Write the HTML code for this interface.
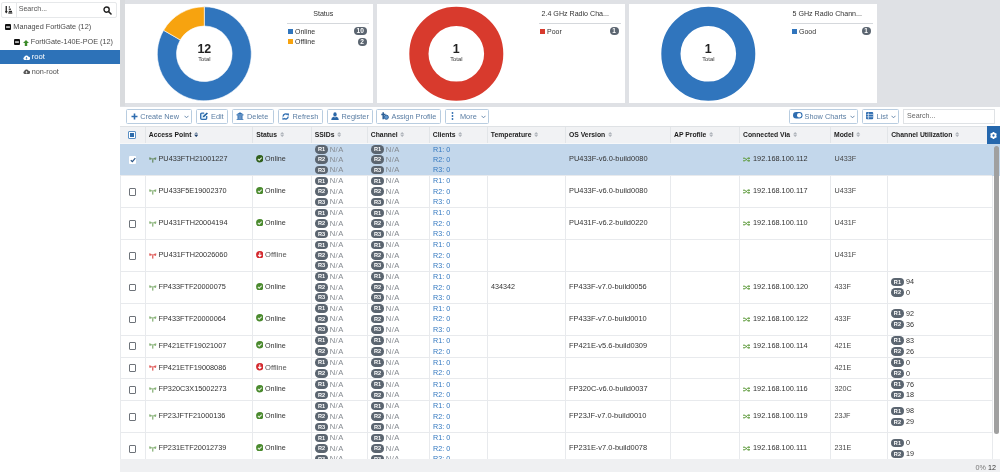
<!DOCTYPE html><html><head><meta charset="utf-8"><style>
html,body{margin:0;padding:0}
body{width:1000px;height:472px;overflow:hidden;position:relative;background:#dfe1e5;font-family:"Liberation Sans", sans-serif;}
div,span{box-sizing:border-box}
</style></head><body><div style="position:absolute;left:0;top:0;width:1000px;height:472px;will-change:transform">
<div style="position:absolute;left:0px;top:0px;width:120px;height:472px;background:#fff"></div>
<div style="position:absolute;left:1px;top:2px;width:116px;height:15.5px;border:1px solid #e6e8ea;border-radius:2px;background:#fff"></div>
<div style="position:absolute;left:16px;top:2px;width:1px;height:15.5px;background:#e6e8ea"></div>
<svg style="position:absolute;left:5px;top:6px" width="8" height="8" viewBox="0 0 8 8"><rect x="0.6" y="0" width="1.3" height="6" fill="#222"/><path d="M-0.3 5.2 L1.25 7.6 L2.8 5.2Z" fill="#222"/><rect x="3.8" y="0.4" width="1.2" height="1.2" fill="#222"/><rect x="3.8" y="2.6" width="2.2" height="1.2" fill="#222"/><rect x="3.8" y="4.8" width="3.2" height="1.4" fill="#222"/><rect x="3.3" y="6.4" width="4" height="1.2" fill="#222"/></svg>
<div style="position:absolute;left:18.7px;top:6.390px;line-height:7.1px;font-size:7.1px;color:#555;font-weight:normal;white-space:nowrap;">Search...</div>
<svg style="position:absolute;left:103px;top:6px" width="9" height="9" viewBox="0 0 9 9"><circle cx="3.6" cy="3.6" r="2.6" stroke="#222" stroke-width="1.4" fill="none"/><path d="M5.5 5.5 L8 8" stroke="#222" stroke-width="1.6" stroke-linecap="round"/></svg>
<svg style="position:absolute;left:5px;top:24.2px" width="6" height="6" viewBox="0 0 6 6"><rect x="0" y="0" width="6" height="6" rx="1" fill="#111"/><rect x="1.1" y="2.4" width="3.8" height="1.3" fill="#fff"/></svg>
<div style="position:absolute;left:13.3px;top:23.121px;line-height:7.3px;font-size:7.3px;color:#4a4a4a;font-weight:normal;white-space:nowrap;">Managed FortiGate (12)</div>
<svg style="position:absolute;left:14px;top:39.2px" width="6" height="6" viewBox="0 0 6 6"><rect x="0" y="0" width="6" height="6" rx="1" fill="#111"/><rect x="1.1" y="2.4" width="3.8" height="1.3" fill="#fff"/></svg>
<svg style="position:absolute;left:23px;top:39.5px" width="6" height="6" viewBox="0 0 6 6"><path d="M3 0 L6 3 L4.2 3 L4.2 6 L1.8 6 L1.8 3 L0 3Z" fill="#3d8b2a"/></svg>
<div style="position:absolute;left:30.8px;top:38.263px;line-height:7.25px;font-size:7.25px;color:#4a4a4a;font-weight:normal;white-space:nowrap;">FortiGate-140E-POE (12)</div>
<div style="position:absolute;left:0px;top:50px;width:120px;height:14.3px;background:#2d72b8"></div>
<svg style="position:absolute;left:23px;top:54.5px" width="7" height="5" viewBox="0 0 7 5"><path d="M1.5 5 A1.5 1.5 0 0 1 1.2 2.2 A2.3 2.3 0 0 1 5.5 1.8 A1.6 1.6 0 0 1 5.6 5Z" fill="#fff"/><path d="M3.5 4.4 L3.5 2.6 M2.6 3.3 L3.5 2.4 L4.4 3.3" stroke="#2d72b8" stroke-width="0.8" fill="none"/></svg>
<div style="position:absolute;left:31.7px;top:53.167px;line-height:7.6px;font-size:7.6px;color:#fff;font-weight:normal;white-space:nowrap;">root</div>
<svg style="position:absolute;left:23px;top:69.2px" width="7" height="5" viewBox="0 0 7 5"><path d="M1.5 5 A1.5 1.5 0 0 1 1.2 2.2 A2.3 2.3 0 0 1 5.5 1.8 A1.6 1.6 0 0 1 5.6 5Z" fill="#555"/><path d="M3.5 4.4 L3.5 2.6 M2.6 3.3 L3.5 2.4 L4.4 3.3" stroke="#fff" stroke-width="0.8" fill="none"/></svg>
<div style="position:absolute;left:31.7px;top:68.221px;line-height:7.3px;font-size:7.3px;color:#505050;font-weight:normal;white-space:nowrap;">non-root</div>
<div style="position:absolute;left:120px;top:0px;width:5px;height:106px;background:#d9dbde"></div>
<div style="position:absolute;left:125px;top:3.5px;width:248px;height:99.5px;background:#fff"></div>
<svg style="position:absolute;left:125px;top:3.5px" width="160" height="99.5" viewBox="0 0 160 99.5"><path d="M79.30 2.80 A47 47 0 1 1 38.60 26.30 L55.22 35.90 A27.8 27.8 0 1 0 79.30 22.00Z" fill="#3075bd" stroke="#fff" stroke-width="0.6"/><path d="M38.60 26.30 A47 47 0 0 1 79.30 2.80 L79.30 22.00 A27.8 27.8 0 0 0 55.22 35.90Z" fill="#f7a30f" stroke="#fff" stroke-width="0.6"/></svg>
<div style="position:absolute;left:184.3px;top:41.699999999999996px;width:40px;text-align:center;font-size:12.4px;line-height:14px;font-weight:bold;color:#222">12</div>
<div style="position:absolute;left:184.3px;top:55.9px;width:40px;text-align:center;font-size:5.8px;line-height:6px;color:#333">Total</div>
<div style="position:absolute;left:287px;top:9.7px;width:72.5px;text-align:center;font-size:7.1px;line-height:9px;color:#333;white-space:nowrap">Status</div>
<div style="position:absolute;left:287px;top:22.7px;width:82px;height:0.8px;background:#d5d8dc"></div>
<div style="position:absolute;left:287.7px;top:28.5px;width:5.4px;height:5.4px;background:#3075bd"></div>
<div style="position:absolute;left:295px;top:27.874px;line-height:7.0px;font-size:7.0px;color:#333;font-weight:normal;white-space:nowrap;">Online</div>
<div style="position:absolute;left:354.0px;top:26.9px;width:12.5px;height:8.6px;border-radius:4.3px;background:#5b6570;color:#fff;font-size:6.6px;line-height:8.6px;text-align:center;font-weight:bold">10</div>
<div style="position:absolute;left:287.7px;top:39.099999999999994px;width:5.4px;height:5.4px;background:#f7a30f"></div>
<div style="position:absolute;left:295px;top:38.474px;line-height:7.0px;font-size:7.0px;color:#333;font-weight:normal;white-space:nowrap;">Offline</div>
<div style="position:absolute;left:357.5px;top:37.5px;width:9px;height:8.6px;border-radius:4.3px;background:#5b6570;color:#fff;font-size:6.6px;line-height:8.6px;text-align:center;font-weight:bold">2</div>
<div style="position:absolute;left:377px;top:3.5px;width:248px;height:99.5px;background:#fff"></div>
<svg style="position:absolute;left:377px;top:3.5px" width="160" height="99.5" viewBox="0 0 160 99.5"><circle cx="79.3" cy="49.8" r="37.4" stroke="#d83a2d" stroke-width="19.2" fill="none"/></svg>
<div style="position:absolute;left:436.3px;top:41.699999999999996px;width:40px;text-align:center;font-size:12.4px;line-height:14px;font-weight:bold;color:#222">1</div>
<div style="position:absolute;left:436.3px;top:55.9px;width:40px;text-align:center;font-size:5.8px;line-height:6px;color:#333">Total</div>
<div style="position:absolute;left:539px;top:9.7px;width:72.5px;text-align:center;font-size:7.1px;line-height:9px;color:#333;white-space:nowrap">2.4 GHz Radio Cha...</div>
<div style="position:absolute;left:539px;top:22.7px;width:82px;height:0.8px;background:#d5d8dc"></div>
<div style="position:absolute;left:539.7px;top:28.5px;width:5.4px;height:5.4px;background:#d83a2d"></div>
<div style="position:absolute;left:547px;top:27.874px;line-height:7.0px;font-size:7.0px;color:#333;font-weight:normal;white-space:nowrap;">Poor</div>
<div style="position:absolute;left:609.5px;top:26.9px;width:9px;height:8.6px;border-radius:4.3px;background:#5b6570;color:#fff;font-size:6.6px;line-height:8.6px;text-align:center;font-weight:bold">1</div>
<div style="position:absolute;left:629px;top:3.5px;width:248px;height:99.5px;background:#fff"></div>
<svg style="position:absolute;left:629px;top:3.5px" width="160" height="99.5" viewBox="0 0 160 99.5"><circle cx="79.3" cy="49.8" r="37.4" stroke="#3075bd" stroke-width="19.2" fill="none"/></svg>
<div style="position:absolute;left:688.3px;top:41.699999999999996px;width:40px;text-align:center;font-size:12.4px;line-height:14px;font-weight:bold;color:#222">1</div>
<div style="position:absolute;left:688.3px;top:55.9px;width:40px;text-align:center;font-size:5.8px;line-height:6px;color:#333">Total</div>
<div style="position:absolute;left:791px;top:9.7px;width:72.5px;text-align:center;font-size:7.1px;line-height:9px;color:#333;white-space:nowrap">5 GHz Radio Chann...</div>
<div style="position:absolute;left:791px;top:22.7px;width:82px;height:0.8px;background:#d5d8dc"></div>
<div style="position:absolute;left:791.7px;top:28.5px;width:5.4px;height:5.4px;background:#3075bd"></div>
<div style="position:absolute;left:799px;top:27.874px;line-height:7.0px;font-size:7.0px;color:#333;font-weight:normal;white-space:nowrap;">Good</div>
<div style="position:absolute;left:861.5px;top:26.9px;width:9px;height:8.6px;border-radius:4.3px;background:#5b6570;color:#fff;font-size:6.6px;line-height:8.6px;text-align:center;font-weight:bold">1</div>
<div style="position:absolute;left:120px;top:106.5px;width:880px;height:19.5px;background:#fff"></div>
<div style="position:absolute;left:126px;top:109.2px;width:65.80000000000001px;height:14.4px;border:1px solid #b9cde0;border-radius:1.5px;background:#fff"></div>
<svg style="position:absolute;left:131px;top:113px" width="7" height="7" viewBox="0 0 7 7"><path d="M3.5 0.5 V6.5 M0.5 3.5 H6.5" stroke="#2f6db0" stroke-width="1.6"/></svg>
<div style="position:absolute;left:140.2px;top:112.578px;line-height:7.35px;font-size:7.35px;color:#5a7da3;font-weight:normal;white-space:nowrap;">Create New</div>
<svg style="position:absolute;left:184.3px;top:114.5px" width="5" height="4" viewBox="0 0 5 4"><path d="M0.5 0.8 L2.5 2.8 L4.5 0.8" stroke="#5a7da3" stroke-width="0.9" fill="none"/></svg>
<div style="position:absolute;left:195.5px;top:109.2px;width:32.30000000000001px;height:14.4px;border:1px solid #b9cde0;border-radius:1.5px;background:#fff"></div>
<svg style="position:absolute;left:200px;top:112px" width="8.5" height="8" viewBox="0 0 8.5 8"><path d="M4.2 1.2 H1.8 Q0.7 1.2 0.7 2.3 V6.2 Q0.7 7.3 1.8 7.3 H5.6 Q6.7 7.3 6.7 6.2 V4" fill="#dff0fb" stroke="#2f6db0" stroke-width="1.3"/><path d="M2.8 5.2 L3 4 L6.8 0.4 L8 1.5 L4.2 5.1Z" fill="#1f5f9e"/></svg>
<div style="position:absolute;left:211px;top:112.578px;line-height:7.35px;font-size:7.35px;color:#5a7da3;font-weight:normal;white-space:nowrap;">Edit</div>
<div style="position:absolute;left:232px;top:109.2px;width:41.5px;height:14.4px;border:1px solid #b9cde0;border-radius:1.5px;background:#fff"></div>
<svg style="position:absolute;left:236px;top:111.8px" width="8" height="8.4" viewBox="0 0 8 8.4"><path d="M4 0.2 L7.8 2.6 H0.2Z" fill="#2f6db0"/><rect x="1.2" y="3.2" width="5.6" height="4.4" fill="#7da3cf"/><path d="M0.6 7.8 H7.4 M0.6 3 H7.4" stroke="#2f6db0" stroke-width="1"/><path d="M2.8 3.8 V7 M5.2 3.8 V7" stroke="#2f6db0" stroke-width="0.8"/></svg>
<div style="position:absolute;left:247px;top:112.578px;line-height:7.35px;font-size:7.35px;color:#5a7da3;font-weight:normal;white-space:nowrap;">Delete</div>
<div style="position:absolute;left:277.8px;top:109.2px;width:45.0px;height:14.4px;border:1px solid #b9cde0;border-radius:1.5px;background:#fff"></div>
<svg style="position:absolute;left:282px;top:112.8px" width="7.5" height="7" viewBox="0 0 7.5 7"><path d="M1.1 3.6 A2.5 2.5 0 0 1 5.6 2" stroke="#2f6db0" stroke-width="1.3" fill="none"/><path d="M6.2 3.4 A2.5 2.5 0 0 1 1.8 5.1" stroke="#2f6db0" stroke-width="1.3" fill="none"/><path d="M4.6 0.6 L7 0.4 L6.8 2.9Z M2.8 6.6 L0.4 6.7 L0.5 4.2Z" fill="#2f6db0"/></svg>
<div style="position:absolute;left:292.5px;top:112.578px;line-height:7.35px;font-size:7.35px;color:#5a7da3;font-weight:normal;white-space:nowrap;">Refresh</div>
<div style="position:absolute;left:326.5px;top:109.2px;width:46.5px;height:14.4px;border:1px solid #b9cde0;border-radius:1.5px;background:#fff"></div>
<svg style="position:absolute;left:330.5px;top:112px" width="8" height="8" viewBox="0 0 8 8"><ellipse cx="4" cy="2.4" rx="1.7" ry="2.2" fill="#2a66a6"/><path d="M0.2 7.9 Q0.3 5.2 2.6 4.8 L4 5.6 L5.4 4.8 Q7.7 5.2 7.8 7.9Z" fill="#2a66a6"/></svg>
<div style="position:absolute;left:341.5px;top:112.578px;line-height:7.35px;font-size:7.35px;color:#5a7da3;font-weight:normal;white-space:nowrap;">Register</div>
<div style="position:absolute;left:376px;top:109.2px;width:65.19999999999999px;height:14.4px;border:1px solid #b9cde0;border-radius:1.5px;background:#fff"></div>
<svg style="position:absolute;left:381px;top:112.3px" width="8" height="8" viewBox="0 0 8 8"><path d="M2.2 0.3 V7.2 M0.3 2.4 H4.5" stroke="#2a5d94" stroke-width="1.5"/><circle cx="5.3" cy="5.2" r="2.1" fill="#5d95cf" stroke="#2a5d94" stroke-width="0.9"/></svg>
<div style="position:absolute;left:391.5px;top:112.578px;line-height:7.35px;font-size:7.35px;color:#5a7da3;font-weight:normal;white-space:nowrap;">Assign Profile</div>
<div style="position:absolute;left:445.2px;top:109.2px;width:43.60000000000002px;height:14.4px;border:1px solid #b9cde0;border-radius:1.5px;background:#fff"></div>
<svg style="position:absolute;left:451px;top:112px" width="3" height="8" viewBox="0 0 3 8"><circle cx="1.5" cy="1" r="0.9" fill="#2f6db0"/><circle cx="1.5" cy="4" r="0.9" fill="#2f6db0"/><circle cx="1.5" cy="7" r="0.9" fill="#2f6db0"/></svg>
<div style="position:absolute;left:460px;top:112.578px;line-height:7.35px;font-size:7.35px;color:#5a7da3;font-weight:normal;white-space:nowrap;">More</div>
<svg style="position:absolute;left:480.5px;top:114.5px" width="5" height="4" viewBox="0 0 5 4"><path d="M0.5 0.8 L2.5 2.8 L4.5 0.8" stroke="#5a7da3" stroke-width="0.9" fill="none"/></svg>
<div style="position:absolute;left:789.2px;top:109.2px;width:68.59999999999991px;height:14.4px;border:1px solid #b9cde0;border-radius:1.5px;background:#fff"></div>
<svg style="position:absolute;left:793px;top:111.9px" width="10" height="7" viewBox="0 0 10 7"><rect x="0" y="0" width="9.5" height="6.5" rx="3.25" fill="#2f6db0"/><circle cx="6.2" cy="3.25" r="2.2" fill="#fff"/></svg>
<div style="position:absolute;left:804.5px;top:112.578px;line-height:7.35px;font-size:7.35px;color:#5a7da3;font-weight:normal;white-space:nowrap;">Show Charts</div>
<svg style="position:absolute;left:850px;top:114.5px" width="5" height="4" viewBox="0 0 5 4"><path d="M0.5 0.8 L2.5 2.8 L4.5 0.8" stroke="#5a7da3" stroke-width="0.9" fill="none"/></svg>
<div style="position:absolute;left:862px;top:109.2px;width:36.799999999999955px;height:14.4px;border:1px solid #b9cde0;border-radius:1.5px;background:#fff"></div>
<svg style="position:absolute;left:866px;top:112.3px" width="7.5" height="7.5" viewBox="0 0 7.5 7.5"><rect x="0" y="0" width="7.2" height="7.2" rx="1" fill="#2f6db0"/><path d="M2.4 0.5 V7 M0.5 2.4 H7 M0.5 4.8 H7" stroke="#fff" stroke-width="0.6"/></svg>
<div style="position:absolute;left:876.5px;top:112.578px;line-height:7.35px;font-size:7.35px;color:#5a7da3;font-weight:normal;white-space:nowrap;">List</div>
<svg style="position:absolute;left:891.3px;top:114.5px" width="5" height="4" viewBox="0 0 5 4"><path d="M0.5 0.8 L2.5 2.8 L4.5 0.8" stroke="#5a7da3" stroke-width="0.9" fill="none"/></svg>
<div style="position:absolute;left:903px;top:108.8px;width:91.6px;height:14.8px;border:1px solid #dfe2e5;background:#fff"></div>
<div style="position:absolute;left:907px;top:113.390px;line-height:7.1px;font-size:7.1px;color:#666;font-weight:normal;white-space:nowrap;">Search...</div>
<div style="position:absolute;left:120px;top:126px;width:880px;height:18px;background:#f1f2f4;border-top:1px solid #dfe2e5;border-bottom:1px solid #f7f8f9"></div>
<div style="position:absolute;left:148.8px;top:131px;font-size:6.8px;line-height:8px;font-weight:bold;color:#1c1c1c;white-space:nowrap">Access Point<svg style="margin-left:2.6px;vertical-align:0px" width="4.4" height="5.2" viewBox="0 0 5 6"><path d="M0.2 2.7 L2.1 0.4 Q2.5 0 2.9 0.4 L4.8 2.7Z" fill="#7f93ab"/><path d="M0.2 3.3 L2.1 5.6 Q2.5 6 2.9 5.6 L4.8 3.3Z" fill="#1d3f69"/></svg></div>
<div style="position:absolute;left:252.4px;top:127px;width:0.8px;height:16px;background:#e2e5e8"></div>
<div style="position:absolute;left:256.2px;top:131px;font-size:6.8px;line-height:8px;font-weight:bold;color:#1c1c1c;white-space:nowrap">Status<svg style="margin-left:2.6px;vertical-align:0px" width="4.4" height="5.2" viewBox="0 0 5 6"><path d="M0.2 2.7 L2.1 0.4 Q2.5 0 2.9 0.4 L4.8 2.7Z" fill="#b0b5bb"/><path d="M0.2 3.3 L2.1 5.6 Q2.5 6 2.9 5.6 L4.8 3.3Z" fill="#b0b5bb"/></svg></div>
<div style="position:absolute;left:311px;top:127px;width:0.8px;height:16px;background:#e2e5e8"></div>
<div style="position:absolute;left:314.8px;top:131px;font-size:6.8px;line-height:8px;font-weight:bold;color:#1c1c1c;white-space:nowrap">SSIDs<svg style="margin-left:2.6px;vertical-align:0px" width="4.4" height="5.2" viewBox="0 0 5 6"><path d="M0.2 2.7 L2.1 0.4 Q2.5 0 2.9 0.4 L4.8 2.7Z" fill="#b0b5bb"/><path d="M0.2 3.3 L2.1 5.6 Q2.5 6 2.9 5.6 L4.8 3.3Z" fill="#b0b5bb"/></svg></div>
<div style="position:absolute;left:367px;top:127px;width:0.8px;height:16px;background:#e2e5e8"></div>
<div style="position:absolute;left:370.8px;top:131px;font-size:6.8px;line-height:8px;font-weight:bold;color:#1c1c1c;white-space:nowrap">Channel<svg style="margin-left:2.6px;vertical-align:0px" width="4.4" height="5.2" viewBox="0 0 5 6"><path d="M0.2 2.7 L2.1 0.4 Q2.5 0 2.9 0.4 L4.8 2.7Z" fill="#b0b5bb"/><path d="M0.2 3.3 L2.1 5.6 Q2.5 6 2.9 5.6 L4.8 3.3Z" fill="#b0b5bb"/></svg></div>
<div style="position:absolute;left:429px;top:127px;width:0.8px;height:16px;background:#e2e5e8"></div>
<div style="position:absolute;left:432.8px;top:131px;font-size:6.8px;line-height:8px;font-weight:bold;color:#1c1c1c;white-space:nowrap">Clients<svg style="margin-left:2.6px;vertical-align:0px" width="4.4" height="5.2" viewBox="0 0 5 6"><path d="M0.2 2.7 L2.1 0.4 Q2.5 0 2.9 0.4 L4.8 2.7Z" fill="#b0b5bb"/><path d="M0.2 3.3 L2.1 5.6 Q2.5 6 2.9 5.6 L4.8 3.3Z" fill="#b0b5bb"/></svg></div>
<div style="position:absolute;left:487px;top:127px;width:0.8px;height:16px;background:#e2e5e8"></div>
<div style="position:absolute;left:490.8px;top:131px;font-size:6.8px;line-height:8px;font-weight:bold;color:#1c1c1c;white-space:nowrap">Temperature<svg style="margin-left:2.6px;vertical-align:0px" width="4.4" height="5.2" viewBox="0 0 5 6"><path d="M0.2 2.7 L2.1 0.4 Q2.5 0 2.9 0.4 L4.8 2.7Z" fill="#b0b5bb"/><path d="M0.2 3.3 L2.1 5.6 Q2.5 6 2.9 5.6 L4.8 3.3Z" fill="#b0b5bb"/></svg></div>
<div style="position:absolute;left:565.2px;top:127px;width:0.8px;height:16px;background:#e2e5e8"></div>
<div style="position:absolute;left:569.0px;top:131px;font-size:6.8px;line-height:8px;font-weight:bold;color:#1c1c1c;white-space:nowrap">OS Version<svg style="margin-left:2.6px;vertical-align:0px" width="4.4" height="5.2" viewBox="0 0 5 6"><path d="M0.2 2.7 L2.1 0.4 Q2.5 0 2.9 0.4 L4.8 2.7Z" fill="#b0b5bb"/><path d="M0.2 3.3 L2.1 5.6 Q2.5 6 2.9 5.6 L4.8 3.3Z" fill="#b0b5bb"/></svg></div>
<div style="position:absolute;left:670.2px;top:127px;width:0.8px;height:16px;background:#e2e5e8"></div>
<div style="position:absolute;left:674.0px;top:131px;font-size:6.8px;line-height:8px;font-weight:bold;color:#1c1c1c;white-space:nowrap">AP Profile<svg style="margin-left:2.6px;vertical-align:0px" width="4.4" height="5.2" viewBox="0 0 5 6"><path d="M0.2 2.7 L2.1 0.4 Q2.5 0 2.9 0.4 L4.8 2.7Z" fill="#b0b5bb"/><path d="M0.2 3.3 L2.1 5.6 Q2.5 6 2.9 5.6 L4.8 3.3Z" fill="#b0b5bb"/></svg></div>
<div style="position:absolute;left:739.2px;top:127px;width:0.8px;height:16px;background:#e2e5e8"></div>
<div style="position:absolute;left:743.0px;top:131px;font-size:6.8px;line-height:8px;font-weight:bold;color:#1c1c1c;white-space:nowrap">Connected Via<svg style="margin-left:2.6px;vertical-align:0px" width="4.4" height="5.2" viewBox="0 0 5 6"><path d="M0.2 2.7 L2.1 0.4 Q2.5 0 2.9 0.4 L4.8 2.7Z" fill="#b0b5bb"/><path d="M0.2 3.3 L2.1 5.6 Q2.5 6 2.9 5.6 L4.8 3.3Z" fill="#b0b5bb"/></svg></div>
<div style="position:absolute;left:830.2px;top:127px;width:0.8px;height:16px;background:#e2e5e8"></div>
<div style="position:absolute;left:834.0px;top:131px;font-size:6.8px;line-height:8px;font-weight:bold;color:#1c1c1c;white-space:nowrap">Model<svg style="margin-left:2.6px;vertical-align:0px" width="4.4" height="5.2" viewBox="0 0 5 6"><path d="M0.2 2.7 L2.1 0.4 Q2.5 0 2.9 0.4 L4.8 2.7Z" fill="#b0b5bb"/><path d="M0.2 3.3 L2.1 5.6 Q2.5 6 2.9 5.6 L4.8 3.3Z" fill="#b0b5bb"/></svg></div>
<div style="position:absolute;left:887.4px;top:127px;width:0.8px;height:16px;background:#e2e5e8"></div>
<div style="position:absolute;left:891.1999999999999px;top:131px;font-size:6.8px;line-height:8px;font-weight:bold;color:#1c1c1c;white-space:nowrap">Channel Utilization<svg style="margin-left:2.6px;vertical-align:0px" width="4.4" height="5.2" viewBox="0 0 5 6"><path d="M0.2 2.7 L2.1 0.4 Q2.5 0 2.9 0.4 L4.8 2.7Z" fill="#b0b5bb"/><path d="M0.2 3.3 L2.1 5.6 Q2.5 6 2.9 5.6 L4.8 3.3Z" fill="#b0b5bb"/></svg></div>
<div style="position:absolute;left:145px;top:127px;width:0.8px;height:16px;background:#e2e5e8"></div>
<div style="position:absolute;left:128.4px;top:131px;width:7.6px;height:7.6px;border:1px solid #5b8fc4;border-radius:1px;background:#fff"></div>
<div style="position:absolute;left:130.2px;top:132.8px;width:4px;height:4px;background:#2f6cab"></div>
<div style="position:absolute;left:987px;top:126px;width:13px;height:18px;background:#2567ad"></div>
<svg style="position:absolute;left:990.3px;top:131.6px" width="7" height="7" viewBox="0 0 8 8"><circle cx="4" cy="4" r="2.3" fill="none" stroke="#fff" stroke-width="2"/><rect x="3.2" y="0" width="1.6" height="1.6" fill="#fff" transform="rotate(0 4 4)"/><rect x="3.2" y="0" width="1.6" height="1.6" fill="#fff" transform="rotate(60 4 4)"/><rect x="3.2" y="0" width="1.6" height="1.6" fill="#fff" transform="rotate(120 4 4)"/><rect x="3.2" y="0" width="1.6" height="1.6" fill="#fff" transform="rotate(180 4 4)"/><rect x="3.2" y="0" width="1.6" height="1.6" fill="#fff" transform="rotate(240 4 4)"/><rect x="3.2" y="0" width="1.6" height="1.6" fill="#fff" transform="rotate(300 4 4)"/></svg>
<div style="position:absolute;left:120px;top:144px;width:880px;height:315px;overflow:hidden;background:#fff">
<div style="position:absolute;left:25px;top:0;width:0.8px;height:315px;background:#e8eaed"></div>
<div style="position:absolute;left:132.4px;top:0;width:0.8px;height:315px;background:#e8eaed"></div>
<div style="position:absolute;left:191px;top:0;width:0.8px;height:315px;background:#e8eaed"></div>
<div style="position:absolute;left:247px;top:0;width:0.8px;height:315px;background:#e8eaed"></div>
<div style="position:absolute;left:309px;top:0;width:0.8px;height:315px;background:#e8eaed"></div>
<div style="position:absolute;left:367px;top:0;width:0.8px;height:315px;background:#e8eaed"></div>
<div style="position:absolute;left:445.20000000000005px;top:0;width:0.8px;height:315px;background:#e8eaed"></div>
<div style="position:absolute;left:550.2px;top:0;width:0.8px;height:315px;background:#e8eaed"></div>
<div style="position:absolute;left:619.2px;top:0;width:0.8px;height:315px;background:#e8eaed"></div>
<div style="position:absolute;left:710.2px;top:0;width:0.8px;height:315px;background:#e8eaed"></div>
<div style="position:absolute;left:767.4px;top:0;width:0.8px;height:315px;background:#e8eaed"></div>
<div style="position:absolute;left:872px;top:0;width:0.8px;height:315px;background:#e8eaed"></div>
<div style="position:absolute;left:0px;top:0px;width:0.8px;height:315px;background:#e8eaed"></div>
<div style="position:absolute;left:0;top:0.0px;width:880px;height:31.9px;background:#c3d7eb"></div>
<div style="position:absolute;left:0;top:31.099999999999998px;width:872px;height:0.8px;background:#e8eaed"></div>
<div style="position:absolute;left:8.599999999999994px;top:12.049999999999999px;width:7.8px;height:7.8px;border-radius:1px;background:#fff"></div>
<svg style="position:absolute;left:9.599999999999994px;top:12.95px" width="6" height="6" viewBox="0 0 6 6"><path d="M0.8 3.2 L2.4 4.7 L5.3 1.2" stroke="#2c5687" stroke-width="1.2" fill="none"/></svg>
<svg style="position:absolute;left:29px;top:12.95px" width="7.5" height="6" viewBox="0 0 7.5 6"><path d="M0.3 0.3 Q0 1.5 0.6 2.9 L2.6 2.3 L2.6 1 Z M7.2 0.3 Q7.5 1.5 6.9 2.9 L4.9 2.3 L4.9 1 Z" fill="#6c8f6a"/><rect x="2.5" y="1.1" width="2.5" height="1.3" fill="#6c8f6a" opacity="0.7"/><rect x="3.1" y="2.2" width="1.3" height="3.4" fill="#6c8f6a"/></svg>
<div style="position:absolute;left:38.5px;top:10.35px;font-size:7.3px;line-height:9px;color:#333;white-space:nowrap">PU433FTH21001227</div>
<svg style="position:absolute;left:135.8px;top:10.95px" width="7.6" height="7.6" viewBox="0 0 8 8"><circle cx="4" cy="4" r="3.9" fill="#2f5f1c"/><path d="M2 4.1 L3.4 5.4 L6 2.7" stroke="#dfe9d6" stroke-width="1.2" fill="none"/></svg>
<div style="position:absolute;left:145px;top:10.35px;font-size:7.2px;line-height:9px;color:#333;white-space:nowrap">Online</div>
<div style="position:absolute;left:195.10000000000002px;top:0.8499999999999996px;width:12.9px;height:8.7px;border-radius:4.35px;background:#5b6570;color:#fff;font-size:5.6px;line-height:8.5px;text-align:center;font-weight:bold">R1</div>
<div style="position:absolute;left:209.70000000000005px;top:0.5px;font-size:7.6px;letter-spacing:0.45px;line-height:9px;color:#858a90;white-space:nowrap">N/A</div>
<div style="position:absolute;left:251.2px;top:0.8499999999999996px;width:12.9px;height:8.7px;border-radius:4.35px;background:#5b6570;color:#fff;font-size:5.6px;line-height:8.5px;text-align:center;font-weight:bold">R1</div>
<div style="position:absolute;left:265.8px;top:0.5px;font-size:7.6px;letter-spacing:0.45px;line-height:9px;color:#858a90;white-space:nowrap">N/A</div>
<div style="position:absolute;left:313px;top:0.5px;font-size:7.2px;line-height:9px;color:#3378c0;white-space:nowrap">R1: 0</div>
<div style="position:absolute;left:195.10000000000002px;top:11.299999999999999px;width:12.9px;height:8.7px;border-radius:4.35px;background:#5b6570;color:#fff;font-size:5.6px;line-height:8.5px;text-align:center;font-weight:bold">R2</div>
<div style="position:absolute;left:209.70000000000005px;top:10.95px;font-size:7.6px;letter-spacing:0.45px;line-height:9px;color:#858a90;white-space:nowrap">N/A</div>
<div style="position:absolute;left:251.2px;top:11.299999999999999px;width:12.9px;height:8.7px;border-radius:4.35px;background:#5b6570;color:#fff;font-size:5.6px;line-height:8.5px;text-align:center;font-weight:bold">R2</div>
<div style="position:absolute;left:265.8px;top:10.95px;font-size:7.6px;letter-spacing:0.45px;line-height:9px;color:#858a90;white-space:nowrap">N/A</div>
<div style="position:absolute;left:313px;top:10.95px;font-size:7.2px;line-height:9px;color:#3378c0;white-space:nowrap">R2: 0</div>
<div style="position:absolute;left:195.10000000000002px;top:21.75px;width:12.9px;height:8.7px;border-radius:4.35px;background:#5b6570;color:#fff;font-size:5.6px;line-height:8.5px;text-align:center;font-weight:bold">R3</div>
<div style="position:absolute;left:209.70000000000005px;top:21.4px;font-size:7.6px;letter-spacing:0.45px;line-height:9px;color:#858a90;white-space:nowrap">N/A</div>
<div style="position:absolute;left:251.2px;top:21.75px;width:12.9px;height:8.7px;border-radius:4.35px;background:#5b6570;color:#fff;font-size:5.6px;line-height:8.5px;text-align:center;font-weight:bold">R3</div>
<div style="position:absolute;left:265.8px;top:21.4px;font-size:7.6px;letter-spacing:0.45px;line-height:9px;color:#858a90;white-space:nowrap">N/A</div>
<div style="position:absolute;left:313px;top:21.4px;font-size:7.2px;line-height:9px;color:#3378c0;white-space:nowrap">R3: 0</div>
<div style="position:absolute;left:449px;top:10.25px;font-size:7.45px;line-height:9px;color:#333;white-space:nowrap">PU433F-v6.0-build0080</div>
<svg style="position:absolute;left:622.7px;top:13.149999999999999px" width="7.5" height="5" viewBox="0 0 7.5 5"><path d="M0 1.2 H2 L4.5 3.8 H6.2 M0 3.8 H2 L4.5 1.2 H6.2" stroke="#5d9a3a" stroke-width="1" fill="none"/><path d="M5.6 0 L7.5 1.2 L5.6 2.4Z M5.6 2.6 L7.5 3.8 L5.6 5Z" fill="#5d9a3a"/></svg>
<div style="position:absolute;left:633px;top:10.299999999999999px;font-size:7.35px;line-height:9px;color:#333;white-space:nowrap">192.168.100.112</div>
<div style="position:absolute;left:714.5px;top:10.35px;font-size:7.2px;line-height:9px;color:#474747;white-space:nowrap">U433F</div>
<div style="position:absolute;left:0;top:63.0px;width:872px;height:0.8px;background:#e8eaed"></div>
<div style="position:absolute;left:8.599999999999994px;top:43.949999999999996px;width:7.8px;height:7.8px;border:1.2px solid #6e737a;border-radius:1px;background:#fff"></div>
<svg style="position:absolute;left:29px;top:44.849999999999994px" width="7.5" height="6" viewBox="0 0 7.5 6"><path d="M0.3 0.3 Q0 1.5 0.6 2.9 L2.6 2.3 L2.6 1 Z M7.2 0.3 Q7.5 1.5 6.9 2.9 L4.9 2.3 L4.9 1 Z" fill="#8ab37a"/><rect x="2.5" y="1.1" width="2.5" height="1.3" fill="#8ab37a" opacity="0.7"/><rect x="3.1" y="2.2" width="1.3" height="3.4" fill="#8ab37a"/></svg>
<div style="position:absolute;left:38.5px;top:42.24999999999999px;font-size:7.3px;line-height:9px;color:#333;white-space:nowrap">PU433F5E19002370</div>
<svg style="position:absolute;left:135.8px;top:42.849999999999994px" width="7.6" height="7.6" viewBox="0 0 8 8"><circle cx="4" cy="4" r="3.9" fill="#4a8a2e"/><path d="M2 4.1 L3.4 5.4 L6 2.7" stroke="#dfe9d6" stroke-width="1.2" fill="none"/></svg>
<div style="position:absolute;left:145px;top:42.24999999999999px;font-size:7.2px;line-height:9px;color:#333;white-space:nowrap">Online</div>
<div style="position:absolute;left:195.10000000000002px;top:32.74999999999999px;width:12.9px;height:8.7px;border-radius:4.35px;background:#5b6570;color:#fff;font-size:5.6px;line-height:8.5px;text-align:center;font-weight:bold">R1</div>
<div style="position:absolute;left:209.70000000000005px;top:32.39999999999999px;font-size:7.6px;letter-spacing:0.45px;line-height:9px;color:#858a90;white-space:nowrap">N/A</div>
<div style="position:absolute;left:251.2px;top:32.74999999999999px;width:12.9px;height:8.7px;border-radius:4.35px;background:#5b6570;color:#fff;font-size:5.6px;line-height:8.5px;text-align:center;font-weight:bold">R1</div>
<div style="position:absolute;left:265.8px;top:32.39999999999999px;font-size:7.6px;letter-spacing:0.45px;line-height:9px;color:#858a90;white-space:nowrap">N/A</div>
<div style="position:absolute;left:313px;top:32.39999999999999px;font-size:7.2px;line-height:9px;color:#3378c0;white-space:nowrap">R1: 0</div>
<div style="position:absolute;left:195.10000000000002px;top:43.199999999999996px;width:12.9px;height:8.7px;border-radius:4.35px;background:#5b6570;color:#fff;font-size:5.6px;line-height:8.5px;text-align:center;font-weight:bold">R2</div>
<div style="position:absolute;left:209.70000000000005px;top:42.849999999999994px;font-size:7.6px;letter-spacing:0.45px;line-height:9px;color:#858a90;white-space:nowrap">N/A</div>
<div style="position:absolute;left:251.2px;top:43.199999999999996px;width:12.9px;height:8.7px;border-radius:4.35px;background:#5b6570;color:#fff;font-size:5.6px;line-height:8.5px;text-align:center;font-weight:bold">R2</div>
<div style="position:absolute;left:265.8px;top:42.849999999999994px;font-size:7.6px;letter-spacing:0.45px;line-height:9px;color:#858a90;white-space:nowrap">N/A</div>
<div style="position:absolute;left:313px;top:42.849999999999994px;font-size:7.2px;line-height:9px;color:#3378c0;white-space:nowrap">R2: 0</div>
<div style="position:absolute;left:195.10000000000002px;top:53.65px;width:12.9px;height:8.7px;border-radius:4.35px;background:#5b6570;color:#fff;font-size:5.6px;line-height:8.5px;text-align:center;font-weight:bold">R3</div>
<div style="position:absolute;left:209.70000000000005px;top:53.3px;font-size:7.6px;letter-spacing:0.45px;line-height:9px;color:#858a90;white-space:nowrap">N/A</div>
<div style="position:absolute;left:251.2px;top:53.65px;width:12.9px;height:8.7px;border-radius:4.35px;background:#5b6570;color:#fff;font-size:5.6px;line-height:8.5px;text-align:center;font-weight:bold">R3</div>
<div style="position:absolute;left:265.8px;top:53.3px;font-size:7.6px;letter-spacing:0.45px;line-height:9px;color:#858a90;white-space:nowrap">N/A</div>
<div style="position:absolute;left:313px;top:53.3px;font-size:7.2px;line-height:9px;color:#3378c0;white-space:nowrap">R3: 0</div>
<div style="position:absolute;left:449px;top:42.14999999999999px;font-size:7.45px;line-height:9px;color:#333;white-space:nowrap">PU433F-v6.0-build0080</div>
<svg style="position:absolute;left:622.7px;top:45.05px" width="7.5" height="5" viewBox="0 0 7.5 5"><path d="M0 1.2 H2 L4.5 3.8 H6.2 M0 3.8 H2 L4.5 1.2 H6.2" stroke="#5d9a3a" stroke-width="1" fill="none"/><path d="M5.6 0 L7.5 1.2 L5.6 2.4Z M5.6 2.6 L7.5 3.8 L5.6 5Z" fill="#5d9a3a"/></svg>
<div style="position:absolute;left:633px;top:42.199999999999996px;font-size:7.35px;line-height:9px;color:#333;white-space:nowrap">192.168.100.117</div>
<div style="position:absolute;left:714.5px;top:42.24999999999999px;font-size:7.2px;line-height:9px;color:#474747;white-space:nowrap">U433F</div>
<div style="position:absolute;left:0;top:94.89999999999999px;width:872px;height:0.8px;background:#e8eaed"></div>
<div style="position:absolute;left:8.599999999999994px;top:75.85px;width:7.8px;height:7.8px;border:1.2px solid #6e737a;border-radius:1px;background:#fff"></div>
<svg style="position:absolute;left:29px;top:76.75px" width="7.5" height="6" viewBox="0 0 7.5 6"><path d="M0.3 0.3 Q0 1.5 0.6 2.9 L2.6 2.3 L2.6 1 Z M7.2 0.3 Q7.5 1.5 6.9 2.9 L4.9 2.3 L4.9 1 Z" fill="#8ab37a"/><rect x="2.5" y="1.1" width="2.5" height="1.3" fill="#8ab37a" opacity="0.7"/><rect x="3.1" y="2.2" width="1.3" height="3.4" fill="#8ab37a"/></svg>
<div style="position:absolute;left:38.5px;top:74.15px;font-size:7.3px;line-height:9px;color:#333;white-space:nowrap">PU431FTH20004194</div>
<svg style="position:absolute;left:135.8px;top:74.75px" width="7.6" height="7.6" viewBox="0 0 8 8"><circle cx="4" cy="4" r="3.9" fill="#4a8a2e"/><path d="M2 4.1 L3.4 5.4 L6 2.7" stroke="#dfe9d6" stroke-width="1.2" fill="none"/></svg>
<div style="position:absolute;left:145px;top:74.15px;font-size:7.2px;line-height:9px;color:#333;white-space:nowrap">Online</div>
<div style="position:absolute;left:195.10000000000002px;top:64.64999999999999px;width:12.9px;height:8.7px;border-radius:4.35px;background:#5b6570;color:#fff;font-size:5.6px;line-height:8.5px;text-align:center;font-weight:bold">R1</div>
<div style="position:absolute;left:209.70000000000005px;top:64.3px;font-size:7.6px;letter-spacing:0.45px;line-height:9px;color:#858a90;white-space:nowrap">N/A</div>
<div style="position:absolute;left:251.2px;top:64.64999999999999px;width:12.9px;height:8.7px;border-radius:4.35px;background:#5b6570;color:#fff;font-size:5.6px;line-height:8.5px;text-align:center;font-weight:bold">R1</div>
<div style="position:absolute;left:265.8px;top:64.3px;font-size:7.6px;letter-spacing:0.45px;line-height:9px;color:#858a90;white-space:nowrap">N/A</div>
<div style="position:absolute;left:313px;top:64.3px;font-size:7.2px;line-height:9px;color:#3378c0;white-space:nowrap">R1: 0</div>
<div style="position:absolute;left:195.10000000000002px;top:75.1px;width:12.9px;height:8.7px;border-radius:4.35px;background:#5b6570;color:#fff;font-size:5.6px;line-height:8.5px;text-align:center;font-weight:bold">R2</div>
<div style="position:absolute;left:209.70000000000005px;top:74.75px;font-size:7.6px;letter-spacing:0.45px;line-height:9px;color:#858a90;white-space:nowrap">N/A</div>
<div style="position:absolute;left:251.2px;top:75.1px;width:12.9px;height:8.7px;border-radius:4.35px;background:#5b6570;color:#fff;font-size:5.6px;line-height:8.5px;text-align:center;font-weight:bold">R2</div>
<div style="position:absolute;left:265.8px;top:74.75px;font-size:7.6px;letter-spacing:0.45px;line-height:9px;color:#858a90;white-space:nowrap">N/A</div>
<div style="position:absolute;left:313px;top:74.75px;font-size:7.2px;line-height:9px;color:#3378c0;white-space:nowrap">R2: 0</div>
<div style="position:absolute;left:195.10000000000002px;top:85.55px;width:12.9px;height:8.7px;border-radius:4.35px;background:#5b6570;color:#fff;font-size:5.6px;line-height:8.5px;text-align:center;font-weight:bold">R3</div>
<div style="position:absolute;left:209.70000000000005px;top:85.2px;font-size:7.6px;letter-spacing:0.45px;line-height:9px;color:#858a90;white-space:nowrap">N/A</div>
<div style="position:absolute;left:251.2px;top:85.55px;width:12.9px;height:8.7px;border-radius:4.35px;background:#5b6570;color:#fff;font-size:5.6px;line-height:8.5px;text-align:center;font-weight:bold">R3</div>
<div style="position:absolute;left:265.8px;top:85.2px;font-size:7.6px;letter-spacing:0.45px;line-height:9px;color:#858a90;white-space:nowrap">N/A</div>
<div style="position:absolute;left:313px;top:85.2px;font-size:7.2px;line-height:9px;color:#3378c0;white-space:nowrap">R3: 0</div>
<div style="position:absolute;left:449px;top:74.05px;font-size:7.45px;line-height:9px;color:#333;white-space:nowrap">PU431F-v6.2-build0220</div>
<svg style="position:absolute;left:622.7px;top:76.95px" width="7.5" height="5" viewBox="0 0 7.5 5"><path d="M0 1.2 H2 L4.5 3.8 H6.2 M0 3.8 H2 L4.5 1.2 H6.2" stroke="#5d9a3a" stroke-width="1" fill="none"/><path d="M5.6 0 L7.5 1.2 L5.6 2.4Z M5.6 2.6 L7.5 3.8 L5.6 5Z" fill="#5d9a3a"/></svg>
<div style="position:absolute;left:633px;top:74.1px;font-size:7.35px;line-height:9px;color:#333;white-space:nowrap">192.168.100.110</div>
<div style="position:absolute;left:714.5px;top:74.15px;font-size:7.2px;line-height:9px;color:#474747;white-space:nowrap">U431F</div>
<div style="position:absolute;left:0;top:126.8px;width:872px;height:0.8px;background:#e8eaed"></div>
<div style="position:absolute;left:8.599999999999994px;top:107.74999999999999px;width:7.8px;height:7.8px;border:1.2px solid #6e737a;border-radius:1px;background:#fff"></div>
<svg style="position:absolute;left:29px;top:108.64999999999999px" width="7.5" height="6" viewBox="0 0 7.5 6"><path d="M0.3 0.3 Q0 1.5 0.6 2.9 L2.6 2.3 L2.6 1 Z M7.2 0.3 Q7.5 1.5 6.9 2.9 L4.9 2.3 L4.9 1 Z" fill="#e0605e"/><rect x="2.5" y="1.1" width="2.5" height="1.3" fill="#e0605e" opacity="0.7"/><rect x="3.1" y="2.2" width="1.3" height="3.4" fill="#e0605e"/></svg>
<div style="position:absolute;left:38.5px;top:106.05px;font-size:7.3px;line-height:9px;color:#333;white-space:nowrap">PU431FTH20026060</div>
<svg style="position:absolute;left:135.8px;top:106.64999999999999px" width="7.6" height="7.6" viewBox="0 0 8 8"><circle cx="4" cy="4" r="3.9" fill="#d42a2f"/><path d="M4 1.6 V5.8 M2.3 4 L4 5.8 L5.7 4" stroke="#fff" stroke-width="1.1" fill="none"/></svg>
<div style="position:absolute;left:145px;top:106.05px;font-size:7.6px;line-height:9px;color:#555;white-space:nowrap">Offline</div>
<div style="position:absolute;left:195.10000000000002px;top:96.54999999999998px;width:12.9px;height:8.7px;border-radius:4.35px;background:#5b6570;color:#fff;font-size:5.6px;line-height:8.5px;text-align:center;font-weight:bold">R1</div>
<div style="position:absolute;left:209.70000000000005px;top:96.19999999999999px;font-size:7.6px;letter-spacing:0.45px;line-height:9px;color:#858a90;white-space:nowrap">N/A</div>
<div style="position:absolute;left:251.2px;top:96.54999999999998px;width:12.9px;height:8.7px;border-radius:4.35px;background:#5b6570;color:#fff;font-size:5.6px;line-height:8.5px;text-align:center;font-weight:bold">R1</div>
<div style="position:absolute;left:265.8px;top:96.19999999999999px;font-size:7.6px;letter-spacing:0.45px;line-height:9px;color:#858a90;white-space:nowrap">N/A</div>
<div style="position:absolute;left:313px;top:96.19999999999999px;font-size:7.2px;line-height:9px;color:#3378c0;white-space:nowrap">R1: 0</div>
<div style="position:absolute;left:195.10000000000002px;top:106.99999999999999px;width:12.9px;height:8.7px;border-radius:4.35px;background:#5b6570;color:#fff;font-size:5.6px;line-height:8.5px;text-align:center;font-weight:bold">R2</div>
<div style="position:absolute;left:209.70000000000005px;top:106.64999999999999px;font-size:7.6px;letter-spacing:0.45px;line-height:9px;color:#858a90;white-space:nowrap">N/A</div>
<div style="position:absolute;left:251.2px;top:106.99999999999999px;width:12.9px;height:8.7px;border-radius:4.35px;background:#5b6570;color:#fff;font-size:5.6px;line-height:8.5px;text-align:center;font-weight:bold">R2</div>
<div style="position:absolute;left:265.8px;top:106.64999999999999px;font-size:7.6px;letter-spacing:0.45px;line-height:9px;color:#858a90;white-space:nowrap">N/A</div>
<div style="position:absolute;left:313px;top:106.64999999999999px;font-size:7.2px;line-height:9px;color:#3378c0;white-space:nowrap">R2: 0</div>
<div style="position:absolute;left:195.10000000000002px;top:117.44999999999999px;width:12.9px;height:8.7px;border-radius:4.35px;background:#5b6570;color:#fff;font-size:5.6px;line-height:8.5px;text-align:center;font-weight:bold">R3</div>
<div style="position:absolute;left:209.70000000000005px;top:117.1px;font-size:7.6px;letter-spacing:0.45px;line-height:9px;color:#858a90;white-space:nowrap">N/A</div>
<div style="position:absolute;left:251.2px;top:117.44999999999999px;width:12.9px;height:8.7px;border-radius:4.35px;background:#5b6570;color:#fff;font-size:5.6px;line-height:8.5px;text-align:center;font-weight:bold">R3</div>
<div style="position:absolute;left:265.8px;top:117.1px;font-size:7.6px;letter-spacing:0.45px;line-height:9px;color:#858a90;white-space:nowrap">N/A</div>
<div style="position:absolute;left:313px;top:117.1px;font-size:7.2px;line-height:9px;color:#3378c0;white-space:nowrap">R3: 0</div>
<div style="position:absolute;left:714.5px;top:106.05px;font-size:7.2px;line-height:9px;color:#474747;white-space:nowrap">U431F</div>
<div style="position:absolute;left:0;top:158.7px;width:872px;height:0.8px;background:#e8eaed"></div>
<div style="position:absolute;left:8.599999999999994px;top:139.64999999999998px;width:7.8px;height:7.8px;border:1.2px solid #6e737a;border-radius:1px;background:#fff"></div>
<svg style="position:absolute;left:29px;top:140.54999999999998px" width="7.5" height="6" viewBox="0 0 7.5 6"><path d="M0.3 0.3 Q0 1.5 0.6 2.9 L2.6 2.3 L2.6 1 Z M7.2 0.3 Q7.5 1.5 6.9 2.9 L4.9 2.3 L4.9 1 Z" fill="#8ab37a"/><rect x="2.5" y="1.1" width="2.5" height="1.3" fill="#8ab37a" opacity="0.7"/><rect x="3.1" y="2.2" width="1.3" height="3.4" fill="#8ab37a"/></svg>
<div style="position:absolute;left:38.5px;top:137.95px;font-size:7.3px;line-height:9px;color:#333;white-space:nowrap">FP433FTF20000075</div>
<svg style="position:absolute;left:135.8px;top:138.54999999999998px" width="7.6" height="7.6" viewBox="0 0 8 8"><circle cx="4" cy="4" r="3.9" fill="#4a8a2e"/><path d="M2 4.1 L3.4 5.4 L6 2.7" stroke="#dfe9d6" stroke-width="1.2" fill="none"/></svg>
<div style="position:absolute;left:145px;top:137.95px;font-size:7.2px;line-height:9px;color:#333;white-space:nowrap">Online</div>
<div style="position:absolute;left:195.10000000000002px;top:128.45px;width:12.9px;height:8.7px;border-radius:4.35px;background:#5b6570;color:#fff;font-size:5.6px;line-height:8.5px;text-align:center;font-weight:bold">R1</div>
<div style="position:absolute;left:209.70000000000005px;top:128.1px;font-size:7.6px;letter-spacing:0.45px;line-height:9px;color:#858a90;white-space:nowrap">N/A</div>
<div style="position:absolute;left:251.2px;top:128.45px;width:12.9px;height:8.7px;border-radius:4.35px;background:#5b6570;color:#fff;font-size:5.6px;line-height:8.5px;text-align:center;font-weight:bold">R1</div>
<div style="position:absolute;left:265.8px;top:128.1px;font-size:7.6px;letter-spacing:0.45px;line-height:9px;color:#858a90;white-space:nowrap">N/A</div>
<div style="position:absolute;left:313px;top:128.1px;font-size:7.2px;line-height:9px;color:#3378c0;white-space:nowrap">R1: 0</div>
<div style="position:absolute;left:195.10000000000002px;top:138.89999999999998px;width:12.9px;height:8.7px;border-radius:4.35px;background:#5b6570;color:#fff;font-size:5.6px;line-height:8.5px;text-align:center;font-weight:bold">R2</div>
<div style="position:absolute;left:209.70000000000005px;top:138.54999999999998px;font-size:7.6px;letter-spacing:0.45px;line-height:9px;color:#858a90;white-space:nowrap">N/A</div>
<div style="position:absolute;left:251.2px;top:138.89999999999998px;width:12.9px;height:8.7px;border-radius:4.35px;background:#5b6570;color:#fff;font-size:5.6px;line-height:8.5px;text-align:center;font-weight:bold">R2</div>
<div style="position:absolute;left:265.8px;top:138.54999999999998px;font-size:7.6px;letter-spacing:0.45px;line-height:9px;color:#858a90;white-space:nowrap">N/A</div>
<div style="position:absolute;left:313px;top:138.54999999999998px;font-size:7.2px;line-height:9px;color:#3378c0;white-space:nowrap">R2: 0</div>
<div style="position:absolute;left:195.10000000000002px;top:149.34999999999997px;width:12.9px;height:8.7px;border-radius:4.35px;background:#5b6570;color:#fff;font-size:5.6px;line-height:8.5px;text-align:center;font-weight:bold">R3</div>
<div style="position:absolute;left:209.70000000000005px;top:148.99999999999997px;font-size:7.6px;letter-spacing:0.45px;line-height:9px;color:#858a90;white-space:nowrap">N/A</div>
<div style="position:absolute;left:251.2px;top:149.34999999999997px;width:12.9px;height:8.7px;border-radius:4.35px;background:#5b6570;color:#fff;font-size:5.6px;line-height:8.5px;text-align:center;font-weight:bold">R3</div>
<div style="position:absolute;left:265.8px;top:148.99999999999997px;font-size:7.6px;letter-spacing:0.45px;line-height:9px;color:#858a90;white-space:nowrap">N/A</div>
<div style="position:absolute;left:313px;top:148.99999999999997px;font-size:7.2px;line-height:9px;color:#3378c0;white-space:nowrap">R3: 0</div>
<div style="position:absolute;left:371px;top:137.95px;font-size:7.2px;line-height:9px;color:#333;white-space:nowrap">434342</div>
<div style="position:absolute;left:449px;top:137.85px;font-size:7.45px;line-height:9px;color:#333;white-space:nowrap">FP433F-v7.0-build0056</div>
<svg style="position:absolute;left:622.7px;top:140.74999999999997px" width="7.5" height="5" viewBox="0 0 7.5 5"><path d="M0 1.2 H2 L4.5 3.8 H6.2 M0 3.8 H2 L4.5 1.2 H6.2" stroke="#5d9a3a" stroke-width="1" fill="none"/><path d="M5.6 0 L7.5 1.2 L5.6 2.4Z M5.6 2.6 L7.5 3.8 L5.6 5Z" fill="#5d9a3a"/></svg>
<div style="position:absolute;left:633px;top:137.89999999999998px;font-size:7.35px;line-height:9px;color:#333;white-space:nowrap">192.168.100.120</div>
<div style="position:absolute;left:714.5px;top:137.95px;font-size:7.2px;line-height:9px;color:#474747;white-space:nowrap">433F</div>
<div style="position:absolute;left:771px;top:133.49999999999997px;width:12.9px;height:8.7px;border-radius:4.35px;background:#5b6570;color:#fff;font-size:5.6px;line-height:8.5px;text-align:center;font-weight:bold">R1</div>
<div style="position:absolute;left:786px;top:133.14999999999998px;font-size:7.2px;line-height:9px;color:#333;white-space:nowrap">94</div>
<div style="position:absolute;left:771px;top:144.29999999999998px;width:12.9px;height:8.7px;border-radius:4.35px;background:#5b6570;color:#fff;font-size:5.6px;line-height:8.5px;text-align:center;font-weight:bold">R2</div>
<div style="position:absolute;left:786px;top:143.95px;font-size:7.2px;line-height:9px;color:#333;white-space:nowrap">0</div>
<div style="position:absolute;left:0;top:190.6px;width:872px;height:0.8px;background:#e8eaed"></div>
<div style="position:absolute;left:8.599999999999994px;top:171.54999999999998px;width:7.8px;height:7.8px;border:1.2px solid #6e737a;border-radius:1px;background:#fff"></div>
<svg style="position:absolute;left:29px;top:172.45px" width="7.5" height="6" viewBox="0 0 7.5 6"><path d="M0.3 0.3 Q0 1.5 0.6 2.9 L2.6 2.3 L2.6 1 Z M7.2 0.3 Q7.5 1.5 6.9 2.9 L4.9 2.3 L4.9 1 Z" fill="#8ab37a"/><rect x="2.5" y="1.1" width="2.5" height="1.3" fill="#8ab37a" opacity="0.7"/><rect x="3.1" y="2.2" width="1.3" height="3.4" fill="#8ab37a"/></svg>
<div style="position:absolute;left:38.5px;top:169.85px;font-size:7.3px;line-height:9px;color:#333;white-space:nowrap">FP433FTF20000064</div>
<svg style="position:absolute;left:135.8px;top:170.45px" width="7.6" height="7.6" viewBox="0 0 8 8"><circle cx="4" cy="4" r="3.9" fill="#4a8a2e"/><path d="M2 4.1 L3.4 5.4 L6 2.7" stroke="#dfe9d6" stroke-width="1.2" fill="none"/></svg>
<div style="position:absolute;left:145px;top:169.85px;font-size:7.2px;line-height:9px;color:#333;white-space:nowrap">Online</div>
<div style="position:absolute;left:195.10000000000002px;top:160.35px;width:12.9px;height:8.7px;border-radius:4.35px;background:#5b6570;color:#fff;font-size:5.6px;line-height:8.5px;text-align:center;font-weight:bold">R1</div>
<div style="position:absolute;left:209.70000000000005px;top:160.0px;font-size:7.6px;letter-spacing:0.45px;line-height:9px;color:#858a90;white-space:nowrap">N/A</div>
<div style="position:absolute;left:251.2px;top:160.35px;width:12.9px;height:8.7px;border-radius:4.35px;background:#5b6570;color:#fff;font-size:5.6px;line-height:8.5px;text-align:center;font-weight:bold">R1</div>
<div style="position:absolute;left:265.8px;top:160.0px;font-size:7.6px;letter-spacing:0.45px;line-height:9px;color:#858a90;white-space:nowrap">N/A</div>
<div style="position:absolute;left:313px;top:160.0px;font-size:7.2px;line-height:9px;color:#3378c0;white-space:nowrap">R1: 0</div>
<div style="position:absolute;left:195.10000000000002px;top:170.79999999999998px;width:12.9px;height:8.7px;border-radius:4.35px;background:#5b6570;color:#fff;font-size:5.6px;line-height:8.5px;text-align:center;font-weight:bold">R2</div>
<div style="position:absolute;left:209.70000000000005px;top:170.45px;font-size:7.6px;letter-spacing:0.45px;line-height:9px;color:#858a90;white-space:nowrap">N/A</div>
<div style="position:absolute;left:251.2px;top:170.79999999999998px;width:12.9px;height:8.7px;border-radius:4.35px;background:#5b6570;color:#fff;font-size:5.6px;line-height:8.5px;text-align:center;font-weight:bold">R2</div>
<div style="position:absolute;left:265.8px;top:170.45px;font-size:7.6px;letter-spacing:0.45px;line-height:9px;color:#858a90;white-space:nowrap">N/A</div>
<div style="position:absolute;left:313px;top:170.45px;font-size:7.2px;line-height:9px;color:#3378c0;white-space:nowrap">R2: 0</div>
<div style="position:absolute;left:195.10000000000002px;top:181.24999999999997px;width:12.9px;height:8.7px;border-radius:4.35px;background:#5b6570;color:#fff;font-size:5.6px;line-height:8.5px;text-align:center;font-weight:bold">R3</div>
<div style="position:absolute;left:209.70000000000005px;top:180.89999999999998px;font-size:7.6px;letter-spacing:0.45px;line-height:9px;color:#858a90;white-space:nowrap">N/A</div>
<div style="position:absolute;left:251.2px;top:181.24999999999997px;width:12.9px;height:8.7px;border-radius:4.35px;background:#5b6570;color:#fff;font-size:5.6px;line-height:8.5px;text-align:center;font-weight:bold">R3</div>
<div style="position:absolute;left:265.8px;top:180.89999999999998px;font-size:7.6px;letter-spacing:0.45px;line-height:9px;color:#858a90;white-space:nowrap">N/A</div>
<div style="position:absolute;left:313px;top:180.89999999999998px;font-size:7.2px;line-height:9px;color:#3378c0;white-space:nowrap">R3: 0</div>
<div style="position:absolute;left:449px;top:169.75px;font-size:7.45px;line-height:9px;color:#333;white-space:nowrap">FP433F-v7.0-build0010</div>
<svg style="position:absolute;left:622.7px;top:172.64999999999998px" width="7.5" height="5" viewBox="0 0 7.5 5"><path d="M0 1.2 H2 L4.5 3.8 H6.2 M0 3.8 H2 L4.5 1.2 H6.2" stroke="#5d9a3a" stroke-width="1" fill="none"/><path d="M5.6 0 L7.5 1.2 L5.6 2.4Z M5.6 2.6 L7.5 3.8 L5.6 5Z" fill="#5d9a3a"/></svg>
<div style="position:absolute;left:633px;top:169.79999999999998px;font-size:7.35px;line-height:9px;color:#333;white-space:nowrap">192.168.100.122</div>
<div style="position:absolute;left:714.5px;top:169.85px;font-size:7.2px;line-height:9px;color:#474747;white-space:nowrap">433F</div>
<div style="position:absolute;left:771px;top:165.39999999999998px;width:12.9px;height:8.7px;border-radius:4.35px;background:#5b6570;color:#fff;font-size:5.6px;line-height:8.5px;text-align:center;font-weight:bold">R1</div>
<div style="position:absolute;left:786px;top:165.04999999999998px;font-size:7.2px;line-height:9px;color:#333;white-space:nowrap">92</div>
<div style="position:absolute;left:771px;top:176.2px;width:12.9px;height:8.7px;border-radius:4.35px;background:#5b6570;color:#fff;font-size:5.6px;line-height:8.5px;text-align:center;font-weight:bold">R2</div>
<div style="position:absolute;left:786px;top:175.85px;font-size:7.2px;line-height:9px;color:#333;white-space:nowrap">36</div>
<div style="position:absolute;left:0;top:212.5px;width:872px;height:0.8px;background:#e8eaed"></div>
<div style="position:absolute;left:8.599999999999994px;top:198.45px;width:7.8px;height:7.8px;border:1.2px solid #6e737a;border-radius:1px;background:#fff"></div>
<svg style="position:absolute;left:29px;top:199.35px" width="7.5" height="6" viewBox="0 0 7.5 6"><path d="M0.3 0.3 Q0 1.5 0.6 2.9 L2.6 2.3 L2.6 1 Z M7.2 0.3 Q7.5 1.5 6.9 2.9 L4.9 2.3 L4.9 1 Z" fill="#8ab37a"/><rect x="2.5" y="1.1" width="2.5" height="1.3" fill="#8ab37a" opacity="0.7"/><rect x="3.1" y="2.2" width="1.3" height="3.4" fill="#8ab37a"/></svg>
<div style="position:absolute;left:38.5px;top:196.75px;font-size:7.3px;line-height:9px;color:#333;white-space:nowrap">FP421ETF19021007</div>
<svg style="position:absolute;left:135.8px;top:197.35px" width="7.6" height="7.6" viewBox="0 0 8 8"><circle cx="4" cy="4" r="3.9" fill="#4a8a2e"/><path d="M2 4.1 L3.4 5.4 L6 2.7" stroke="#dfe9d6" stroke-width="1.2" fill="none"/></svg>
<div style="position:absolute;left:145px;top:196.75px;font-size:7.2px;line-height:9px;color:#333;white-space:nowrap">Online</div>
<div style="position:absolute;left:195.10000000000002px;top:192.475px;width:12.9px;height:8.7px;border-radius:4.35px;background:#5b6570;color:#fff;font-size:5.6px;line-height:8.5px;text-align:center;font-weight:bold">R1</div>
<div style="position:absolute;left:209.70000000000005px;top:192.125px;font-size:7.6px;letter-spacing:0.45px;line-height:9px;color:#858a90;white-space:nowrap">N/A</div>
<div style="position:absolute;left:251.2px;top:192.475px;width:12.9px;height:8.7px;border-radius:4.35px;background:#5b6570;color:#fff;font-size:5.6px;line-height:8.5px;text-align:center;font-weight:bold">R1</div>
<div style="position:absolute;left:265.8px;top:192.125px;font-size:7.6px;letter-spacing:0.45px;line-height:9px;color:#858a90;white-space:nowrap">N/A</div>
<div style="position:absolute;left:313px;top:192.125px;font-size:7.2px;line-height:9px;color:#3378c0;white-space:nowrap">R1: 0</div>
<div style="position:absolute;left:195.10000000000002px;top:202.92499999999998px;width:12.9px;height:8.7px;border-radius:4.35px;background:#5b6570;color:#fff;font-size:5.6px;line-height:8.5px;text-align:center;font-weight:bold">R2</div>
<div style="position:absolute;left:209.70000000000005px;top:202.575px;font-size:7.6px;letter-spacing:0.45px;line-height:9px;color:#858a90;white-space:nowrap">N/A</div>
<div style="position:absolute;left:251.2px;top:202.92499999999998px;width:12.9px;height:8.7px;border-radius:4.35px;background:#5b6570;color:#fff;font-size:5.6px;line-height:8.5px;text-align:center;font-weight:bold">R2</div>
<div style="position:absolute;left:265.8px;top:202.575px;font-size:7.6px;letter-spacing:0.45px;line-height:9px;color:#858a90;white-space:nowrap">N/A</div>
<div style="position:absolute;left:313px;top:202.575px;font-size:7.2px;line-height:9px;color:#3378c0;white-space:nowrap">R2: 0</div>
<div style="position:absolute;left:449px;top:196.65px;font-size:7.45px;line-height:9px;color:#333;white-space:nowrap">FP421E-v5.6-build0309</div>
<svg style="position:absolute;left:622.7px;top:199.54999999999998px" width="7.5" height="5" viewBox="0 0 7.5 5"><path d="M0 1.2 H2 L4.5 3.8 H6.2 M0 3.8 H2 L4.5 1.2 H6.2" stroke="#5d9a3a" stroke-width="1" fill="none"/><path d="M5.6 0 L7.5 1.2 L5.6 2.4Z M5.6 2.6 L7.5 3.8 L5.6 5Z" fill="#5d9a3a"/></svg>
<div style="position:absolute;left:633px;top:196.7px;font-size:7.35px;line-height:9px;color:#333;white-space:nowrap">192.168.100.114</div>
<div style="position:absolute;left:714.5px;top:196.75px;font-size:7.2px;line-height:9px;color:#474747;white-space:nowrap">421E</div>
<div style="position:absolute;left:771px;top:192.29999999999998px;width:12.9px;height:8.7px;border-radius:4.35px;background:#5b6570;color:#fff;font-size:5.6px;line-height:8.5px;text-align:center;font-weight:bold">R1</div>
<div style="position:absolute;left:786px;top:191.95px;font-size:7.2px;line-height:9px;color:#333;white-space:nowrap">83</div>
<div style="position:absolute;left:771px;top:203.1px;width:12.9px;height:8.7px;border-radius:4.35px;background:#5b6570;color:#fff;font-size:5.6px;line-height:8.5px;text-align:center;font-weight:bold">R2</div>
<div style="position:absolute;left:786px;top:202.75px;font-size:7.2px;line-height:9px;color:#333;white-space:nowrap">26</div>
<div style="position:absolute;left:0;top:234.4px;width:872px;height:0.8px;background:#e8eaed"></div>
<div style="position:absolute;left:8.599999999999994px;top:220.35px;width:7.8px;height:7.8px;border:1.2px solid #6e737a;border-radius:1px;background:#fff"></div>
<svg style="position:absolute;left:29px;top:221.25px" width="7.5" height="6" viewBox="0 0 7.5 6"><path d="M0.3 0.3 Q0 1.5 0.6 2.9 L2.6 2.3 L2.6 1 Z M7.2 0.3 Q7.5 1.5 6.9 2.9 L4.9 2.3 L4.9 1 Z" fill="#e0605e"/><rect x="2.5" y="1.1" width="2.5" height="1.3" fill="#e0605e" opacity="0.7"/><rect x="3.1" y="2.2" width="1.3" height="3.4" fill="#e0605e"/></svg>
<div style="position:absolute;left:38.5px;top:218.65px;font-size:7.3px;line-height:9px;color:#333;white-space:nowrap">FP421ETF19008086</div>
<svg style="position:absolute;left:135.8px;top:219.25px" width="7.6" height="7.6" viewBox="0 0 8 8"><circle cx="4" cy="4" r="3.9" fill="#d42a2f"/><path d="M4 1.6 V5.8 M2.3 4 L4 5.8 L5.7 4" stroke="#fff" stroke-width="1.1" fill="none"/></svg>
<div style="position:absolute;left:145px;top:218.65px;font-size:7.6px;line-height:9px;color:#555;white-space:nowrap">Offline</div>
<div style="position:absolute;left:195.10000000000002px;top:214.375px;width:12.9px;height:8.7px;border-radius:4.35px;background:#5b6570;color:#fff;font-size:5.6px;line-height:8.5px;text-align:center;font-weight:bold">R1</div>
<div style="position:absolute;left:209.70000000000005px;top:214.025px;font-size:7.6px;letter-spacing:0.45px;line-height:9px;color:#858a90;white-space:nowrap">N/A</div>
<div style="position:absolute;left:251.2px;top:214.375px;width:12.9px;height:8.7px;border-radius:4.35px;background:#5b6570;color:#fff;font-size:5.6px;line-height:8.5px;text-align:center;font-weight:bold">R1</div>
<div style="position:absolute;left:265.8px;top:214.025px;font-size:7.6px;letter-spacing:0.45px;line-height:9px;color:#858a90;white-space:nowrap">N/A</div>
<div style="position:absolute;left:313px;top:214.025px;font-size:7.2px;line-height:9px;color:#3378c0;white-space:nowrap">R1: 0</div>
<div style="position:absolute;left:195.10000000000002px;top:224.825px;width:12.9px;height:8.7px;border-radius:4.35px;background:#5b6570;color:#fff;font-size:5.6px;line-height:8.5px;text-align:center;font-weight:bold">R2</div>
<div style="position:absolute;left:209.70000000000005px;top:224.475px;font-size:7.6px;letter-spacing:0.45px;line-height:9px;color:#858a90;white-space:nowrap">N/A</div>
<div style="position:absolute;left:251.2px;top:224.825px;width:12.9px;height:8.7px;border-radius:4.35px;background:#5b6570;color:#fff;font-size:5.6px;line-height:8.5px;text-align:center;font-weight:bold">R2</div>
<div style="position:absolute;left:265.8px;top:224.475px;font-size:7.6px;letter-spacing:0.45px;line-height:9px;color:#858a90;white-space:nowrap">N/A</div>
<div style="position:absolute;left:313px;top:224.475px;font-size:7.2px;line-height:9px;color:#3378c0;white-space:nowrap">R2: 0</div>
<div style="position:absolute;left:714.5px;top:218.65px;font-size:7.2px;line-height:9px;color:#474747;white-space:nowrap">421E</div>
<div style="position:absolute;left:771px;top:214.2px;width:12.9px;height:8.7px;border-radius:4.35px;background:#5b6570;color:#fff;font-size:5.6px;line-height:8.5px;text-align:center;font-weight:bold">R1</div>
<div style="position:absolute;left:786px;top:213.85px;font-size:7.2px;line-height:9px;color:#333;white-space:nowrap">0</div>
<div style="position:absolute;left:771px;top:225.0px;width:12.9px;height:8.7px;border-radius:4.35px;background:#5b6570;color:#fff;font-size:5.6px;line-height:8.5px;text-align:center;font-weight:bold">R2</div>
<div style="position:absolute;left:786px;top:224.65px;font-size:7.2px;line-height:9px;color:#333;white-space:nowrap">0</div>
<div style="position:absolute;left:0;top:255.90000000000003px;width:872px;height:0.8px;background:#e8eaed"></div>
<div style="position:absolute;left:8.599999999999994px;top:242.05px;width:7.8px;height:7.8px;border:1.2px solid #6e737a;border-radius:1px;background:#fff"></div>
<svg style="position:absolute;left:29px;top:242.95000000000002px" width="7.5" height="6" viewBox="0 0 7.5 6"><path d="M0.3 0.3 Q0 1.5 0.6 2.9 L2.6 2.3 L2.6 1 Z M7.2 0.3 Q7.5 1.5 6.9 2.9 L4.9 2.3 L4.9 1 Z" fill="#8ab37a"/><rect x="2.5" y="1.1" width="2.5" height="1.3" fill="#8ab37a" opacity="0.7"/><rect x="3.1" y="2.2" width="1.3" height="3.4" fill="#8ab37a"/></svg>
<div style="position:absolute;left:38.5px;top:240.35000000000002px;font-size:7.3px;line-height:9px;color:#333;white-space:nowrap">FP320C3X15002273</div>
<svg style="position:absolute;left:135.8px;top:240.95000000000002px" width="7.6" height="7.6" viewBox="0 0 8 8"><circle cx="4" cy="4" r="3.9" fill="#4a8a2e"/><path d="M2 4.1 L3.4 5.4 L6 2.7" stroke="#dfe9d6" stroke-width="1.2" fill="none"/></svg>
<div style="position:absolute;left:145px;top:240.35000000000002px;font-size:7.2px;line-height:9px;color:#333;white-space:nowrap">Online</div>
<div style="position:absolute;left:195.10000000000002px;top:236.07500000000002px;width:12.9px;height:8.7px;border-radius:4.35px;background:#5b6570;color:#fff;font-size:5.6px;line-height:8.5px;text-align:center;font-weight:bold">R1</div>
<div style="position:absolute;left:209.70000000000005px;top:235.72500000000002px;font-size:7.6px;letter-spacing:0.45px;line-height:9px;color:#858a90;white-space:nowrap">N/A</div>
<div style="position:absolute;left:251.2px;top:236.07500000000002px;width:12.9px;height:8.7px;border-radius:4.35px;background:#5b6570;color:#fff;font-size:5.6px;line-height:8.5px;text-align:center;font-weight:bold">R1</div>
<div style="position:absolute;left:265.8px;top:235.72500000000002px;font-size:7.6px;letter-spacing:0.45px;line-height:9px;color:#858a90;white-space:nowrap">N/A</div>
<div style="position:absolute;left:313px;top:235.72500000000002px;font-size:7.2px;line-height:9px;color:#3378c0;white-space:nowrap">R1: 0</div>
<div style="position:absolute;left:195.10000000000002px;top:246.525px;width:12.9px;height:8.7px;border-radius:4.35px;background:#5b6570;color:#fff;font-size:5.6px;line-height:8.5px;text-align:center;font-weight:bold">R2</div>
<div style="position:absolute;left:209.70000000000005px;top:246.175px;font-size:7.6px;letter-spacing:0.45px;line-height:9px;color:#858a90;white-space:nowrap">N/A</div>
<div style="position:absolute;left:251.2px;top:246.525px;width:12.9px;height:8.7px;border-radius:4.35px;background:#5b6570;color:#fff;font-size:5.6px;line-height:8.5px;text-align:center;font-weight:bold">R2</div>
<div style="position:absolute;left:265.8px;top:246.175px;font-size:7.6px;letter-spacing:0.45px;line-height:9px;color:#858a90;white-space:nowrap">N/A</div>
<div style="position:absolute;left:313px;top:246.175px;font-size:7.2px;line-height:9px;color:#3378c0;white-space:nowrap">R2: 0</div>
<div style="position:absolute;left:449px;top:240.25000000000003px;font-size:7.45px;line-height:9px;color:#333;white-space:nowrap">FP320C-v6.0-build0037</div>
<svg style="position:absolute;left:622.7px;top:243.15px" width="7.5" height="5" viewBox="0 0 7.5 5"><path d="M0 1.2 H2 L4.5 3.8 H6.2 M0 3.8 H2 L4.5 1.2 H6.2" stroke="#5d9a3a" stroke-width="1" fill="none"/><path d="M5.6 0 L7.5 1.2 L5.6 2.4Z M5.6 2.6 L7.5 3.8 L5.6 5Z" fill="#5d9a3a"/></svg>
<div style="position:absolute;left:633px;top:240.3px;font-size:7.35px;line-height:9px;color:#333;white-space:nowrap">192.168.100.116</div>
<div style="position:absolute;left:714.5px;top:240.35000000000002px;font-size:7.2px;line-height:9px;color:#474747;white-space:nowrap">320C</div>
<div style="position:absolute;left:771px;top:235.9px;width:12.9px;height:8.7px;border-radius:4.35px;background:#5b6570;color:#fff;font-size:5.6px;line-height:8.5px;text-align:center;font-weight:bold">R1</div>
<div style="position:absolute;left:786px;top:235.55px;font-size:7.2px;line-height:9px;color:#333;white-space:nowrap">76</div>
<div style="position:absolute;left:771px;top:246.70000000000002px;width:12.9px;height:8.7px;border-radius:4.35px;background:#5b6570;color:#fff;font-size:5.6px;line-height:8.5px;text-align:center;font-weight:bold">R2</div>
<div style="position:absolute;left:786px;top:246.35000000000002px;font-size:7.2px;line-height:9px;color:#333;white-space:nowrap">18</div>
<div style="position:absolute;left:0;top:288.00000000000006px;width:872px;height:0.8px;background:#e8eaed"></div>
<div style="position:absolute;left:8.599999999999994px;top:268.8500000000001px;width:7.8px;height:7.8px;border:1.2px solid #6e737a;border-radius:1px;background:#fff"></div>
<svg style="position:absolute;left:29px;top:269.75000000000006px" width="7.5" height="6" viewBox="0 0 7.5 6"><path d="M0.3 0.3 Q0 1.5 0.6 2.9 L2.6 2.3 L2.6 1 Z M7.2 0.3 Q7.5 1.5 6.9 2.9 L4.9 2.3 L4.9 1 Z" fill="#8ab37a"/><rect x="2.5" y="1.1" width="2.5" height="1.3" fill="#8ab37a" opacity="0.7"/><rect x="3.1" y="2.2" width="1.3" height="3.4" fill="#8ab37a"/></svg>
<div style="position:absolute;left:38.5px;top:267.15000000000003px;font-size:7.3px;line-height:9px;color:#333;white-space:nowrap">FP23JFTF21000136</div>
<svg style="position:absolute;left:135.8px;top:267.75000000000006px" width="7.6" height="7.6" viewBox="0 0 8 8"><circle cx="4" cy="4" r="3.9" fill="#4a8a2e"/><path d="M2 4.1 L3.4 5.4 L6 2.7" stroke="#dfe9d6" stroke-width="1.2" fill="none"/></svg>
<div style="position:absolute;left:145px;top:267.15000000000003px;font-size:7.2px;line-height:9px;color:#333;white-space:nowrap">Online</div>
<div style="position:absolute;left:195.10000000000002px;top:257.6500000000001px;width:12.9px;height:8.7px;border-radius:4.35px;background:#5b6570;color:#fff;font-size:5.6px;line-height:8.5px;text-align:center;font-weight:bold">R1</div>
<div style="position:absolute;left:209.70000000000005px;top:257.30000000000007px;font-size:7.6px;letter-spacing:0.45px;line-height:9px;color:#858a90;white-space:nowrap">N/A</div>
<div style="position:absolute;left:251.2px;top:257.6500000000001px;width:12.9px;height:8.7px;border-radius:4.35px;background:#5b6570;color:#fff;font-size:5.6px;line-height:8.5px;text-align:center;font-weight:bold">R1</div>
<div style="position:absolute;left:265.8px;top:257.30000000000007px;font-size:7.6px;letter-spacing:0.45px;line-height:9px;color:#858a90;white-space:nowrap">N/A</div>
<div style="position:absolute;left:313px;top:257.30000000000007px;font-size:7.2px;line-height:9px;color:#3378c0;white-space:nowrap">R1: 0</div>
<div style="position:absolute;left:195.10000000000002px;top:268.1000000000001px;width:12.9px;height:8.7px;border-radius:4.35px;background:#5b6570;color:#fff;font-size:5.6px;line-height:8.5px;text-align:center;font-weight:bold">R2</div>
<div style="position:absolute;left:209.70000000000005px;top:267.75000000000006px;font-size:7.6px;letter-spacing:0.45px;line-height:9px;color:#858a90;white-space:nowrap">N/A</div>
<div style="position:absolute;left:251.2px;top:268.1000000000001px;width:12.9px;height:8.7px;border-radius:4.35px;background:#5b6570;color:#fff;font-size:5.6px;line-height:8.5px;text-align:center;font-weight:bold">R2</div>
<div style="position:absolute;left:265.8px;top:267.75000000000006px;font-size:7.6px;letter-spacing:0.45px;line-height:9px;color:#858a90;white-space:nowrap">N/A</div>
<div style="position:absolute;left:313px;top:267.75000000000006px;font-size:7.2px;line-height:9px;color:#3378c0;white-space:nowrap">R2: 0</div>
<div style="position:absolute;left:195.10000000000002px;top:278.55000000000007px;width:12.9px;height:8.7px;border-radius:4.35px;background:#5b6570;color:#fff;font-size:5.6px;line-height:8.5px;text-align:center;font-weight:bold">R3</div>
<div style="position:absolute;left:209.70000000000005px;top:278.20000000000005px;font-size:7.6px;letter-spacing:0.45px;line-height:9px;color:#858a90;white-space:nowrap">N/A</div>
<div style="position:absolute;left:251.2px;top:278.55000000000007px;width:12.9px;height:8.7px;border-radius:4.35px;background:#5b6570;color:#fff;font-size:5.6px;line-height:8.5px;text-align:center;font-weight:bold">R3</div>
<div style="position:absolute;left:265.8px;top:278.20000000000005px;font-size:7.6px;letter-spacing:0.45px;line-height:9px;color:#858a90;white-space:nowrap">N/A</div>
<div style="position:absolute;left:313px;top:278.20000000000005px;font-size:7.2px;line-height:9px;color:#3378c0;white-space:nowrap">R3: 0</div>
<div style="position:absolute;left:449px;top:267.05000000000007px;font-size:7.45px;line-height:9px;color:#333;white-space:nowrap">FP23JF-v7.0-build0010</div>
<svg style="position:absolute;left:622.7px;top:269.95000000000005px" width="7.5" height="5" viewBox="0 0 7.5 5"><path d="M0 1.2 H2 L4.5 3.8 H6.2 M0 3.8 H2 L4.5 1.2 H6.2" stroke="#5d9a3a" stroke-width="1" fill="none"/><path d="M5.6 0 L7.5 1.2 L5.6 2.4Z M5.6 2.6 L7.5 3.8 L5.6 5Z" fill="#5d9a3a"/></svg>
<div style="position:absolute;left:633px;top:267.1000000000001px;font-size:7.35px;line-height:9px;color:#333;white-space:nowrap">192.168.100.119</div>
<div style="position:absolute;left:714.5px;top:267.15000000000003px;font-size:7.2px;line-height:9px;color:#474747;white-space:nowrap">23JF</div>
<div style="position:absolute;left:771px;top:262.7000000000001px;width:12.9px;height:8.7px;border-radius:4.35px;background:#5b6570;color:#fff;font-size:5.6px;line-height:8.5px;text-align:center;font-weight:bold">R1</div>
<div style="position:absolute;left:786px;top:262.3500000000001px;font-size:7.2px;line-height:9px;color:#333;white-space:nowrap">98</div>
<div style="position:absolute;left:771px;top:273.50000000000006px;width:12.9px;height:8.7px;border-radius:4.35px;background:#5b6570;color:#fff;font-size:5.6px;line-height:8.5px;text-align:center;font-weight:bold">R2</div>
<div style="position:absolute;left:786px;top:273.15000000000003px;font-size:7.2px;line-height:9px;color:#333;white-space:nowrap">29</div>
<div style="position:absolute;left:0;top:319.90000000000003px;width:872px;height:0.8px;background:#e8eaed"></div>
<div style="position:absolute;left:8.599999999999994px;top:300.8500000000001px;width:7.8px;height:7.8px;border:1.2px solid #6e737a;border-radius:1px;background:#fff"></div>
<svg style="position:absolute;left:29px;top:301.75000000000006px" width="7.5" height="6" viewBox="0 0 7.5 6"><path d="M0.3 0.3 Q0 1.5 0.6 2.9 L2.6 2.3 L2.6 1 Z M7.2 0.3 Q7.5 1.5 6.9 2.9 L4.9 2.3 L4.9 1 Z" fill="#8ab37a"/><rect x="2.5" y="1.1" width="2.5" height="1.3" fill="#8ab37a" opacity="0.7"/><rect x="3.1" y="2.2" width="1.3" height="3.4" fill="#8ab37a"/></svg>
<div style="position:absolute;left:38.5px;top:299.15000000000003px;font-size:7.3px;line-height:9px;color:#333;white-space:nowrap">FP231ETF20012739</div>
<svg style="position:absolute;left:135.8px;top:299.75000000000006px" width="7.6" height="7.6" viewBox="0 0 8 8"><circle cx="4" cy="4" r="3.9" fill="#4a8a2e"/><path d="M2 4.1 L3.4 5.4 L6 2.7" stroke="#dfe9d6" stroke-width="1.2" fill="none"/></svg>
<div style="position:absolute;left:145px;top:299.15000000000003px;font-size:7.2px;line-height:9px;color:#333;white-space:nowrap">Online</div>
<div style="position:absolute;left:195.10000000000002px;top:289.6500000000001px;width:12.9px;height:8.7px;border-radius:4.35px;background:#5b6570;color:#fff;font-size:5.6px;line-height:8.5px;text-align:center;font-weight:bold">R1</div>
<div style="position:absolute;left:209.70000000000005px;top:289.30000000000007px;font-size:7.6px;letter-spacing:0.45px;line-height:9px;color:#858a90;white-space:nowrap">N/A</div>
<div style="position:absolute;left:251.2px;top:289.6500000000001px;width:12.9px;height:8.7px;border-radius:4.35px;background:#5b6570;color:#fff;font-size:5.6px;line-height:8.5px;text-align:center;font-weight:bold">R1</div>
<div style="position:absolute;left:265.8px;top:289.30000000000007px;font-size:7.6px;letter-spacing:0.45px;line-height:9px;color:#858a90;white-space:nowrap">N/A</div>
<div style="position:absolute;left:313px;top:289.30000000000007px;font-size:7.2px;line-height:9px;color:#3378c0;white-space:nowrap">R1: 0</div>
<div style="position:absolute;left:195.10000000000002px;top:300.1000000000001px;width:12.9px;height:8.7px;border-radius:4.35px;background:#5b6570;color:#fff;font-size:5.6px;line-height:8.5px;text-align:center;font-weight:bold">R2</div>
<div style="position:absolute;left:209.70000000000005px;top:299.75000000000006px;font-size:7.6px;letter-spacing:0.45px;line-height:9px;color:#858a90;white-space:nowrap">N/A</div>
<div style="position:absolute;left:251.2px;top:300.1000000000001px;width:12.9px;height:8.7px;border-radius:4.35px;background:#5b6570;color:#fff;font-size:5.6px;line-height:8.5px;text-align:center;font-weight:bold">R2</div>
<div style="position:absolute;left:265.8px;top:299.75000000000006px;font-size:7.6px;letter-spacing:0.45px;line-height:9px;color:#858a90;white-space:nowrap">N/A</div>
<div style="position:absolute;left:313px;top:299.75000000000006px;font-size:7.2px;line-height:9px;color:#3378c0;white-space:nowrap">R2: 0</div>
<div style="position:absolute;left:195.10000000000002px;top:310.55000000000007px;width:12.9px;height:8.7px;border-radius:4.35px;background:#5b6570;color:#fff;font-size:5.6px;line-height:8.5px;text-align:center;font-weight:bold">R3</div>
<div style="position:absolute;left:209.70000000000005px;top:310.20000000000005px;font-size:7.6px;letter-spacing:0.45px;line-height:9px;color:#858a90;white-space:nowrap">N/A</div>
<div style="position:absolute;left:251.2px;top:310.55000000000007px;width:12.9px;height:8.7px;border-radius:4.35px;background:#5b6570;color:#fff;font-size:5.6px;line-height:8.5px;text-align:center;font-weight:bold">R3</div>
<div style="position:absolute;left:265.8px;top:310.20000000000005px;font-size:7.6px;letter-spacing:0.45px;line-height:9px;color:#858a90;white-space:nowrap">N/A</div>
<div style="position:absolute;left:313px;top:310.20000000000005px;font-size:7.2px;line-height:9px;color:#3378c0;white-space:nowrap">R3: 0</div>
<div style="position:absolute;left:449px;top:299.05000000000007px;font-size:7.45px;line-height:9px;color:#333;white-space:nowrap">FP231E-v7.0-build0078</div>
<svg style="position:absolute;left:622.7px;top:301.95000000000005px" width="7.5" height="5" viewBox="0 0 7.5 5"><path d="M0 1.2 H2 L4.5 3.8 H6.2 M0 3.8 H2 L4.5 1.2 H6.2" stroke="#5d9a3a" stroke-width="1" fill="none"/><path d="M5.6 0 L7.5 1.2 L5.6 2.4Z M5.6 2.6 L7.5 3.8 L5.6 5Z" fill="#5d9a3a"/></svg>
<div style="position:absolute;left:633px;top:299.1000000000001px;font-size:7.35px;line-height:9px;color:#333;white-space:nowrap">192.168.100.111</div>
<div style="position:absolute;left:714.5px;top:299.15000000000003px;font-size:7.2px;line-height:9px;color:#474747;white-space:nowrap">231E</div>
<div style="position:absolute;left:771px;top:294.7000000000001px;width:12.9px;height:8.7px;border-radius:4.35px;background:#5b6570;color:#fff;font-size:5.6px;line-height:8.5px;text-align:center;font-weight:bold">R1</div>
<div style="position:absolute;left:786px;top:294.3500000000001px;font-size:7.2px;line-height:9px;color:#333;white-space:nowrap">0</div>
<div style="position:absolute;left:771px;top:305.50000000000006px;width:12.9px;height:8.7px;border-radius:4.35px;background:#5b6570;color:#fff;font-size:5.6px;line-height:8.5px;text-align:center;font-weight:bold">R2</div>
<div style="position:absolute;left:786px;top:305.15000000000003px;font-size:7.2px;line-height:9px;color:#333;white-space:nowrap">19</div>
<div style="position:absolute;left:874px;top:1.5px;width:5px;height:288px;border-radius:2.5px;background:#a0a0a0"></div>
</div>
<div style="position:absolute;left:120px;top:459px;width:880px;height:13px;background:#eff0f2"></div>
<div style="position:absolute;left:975.5px;top:462.5px;font-size:7.2px;line-height:9px;white-space:nowrap;color:#333"><span style="color:#777">0%</span> 12</div>
</div></body></html>
